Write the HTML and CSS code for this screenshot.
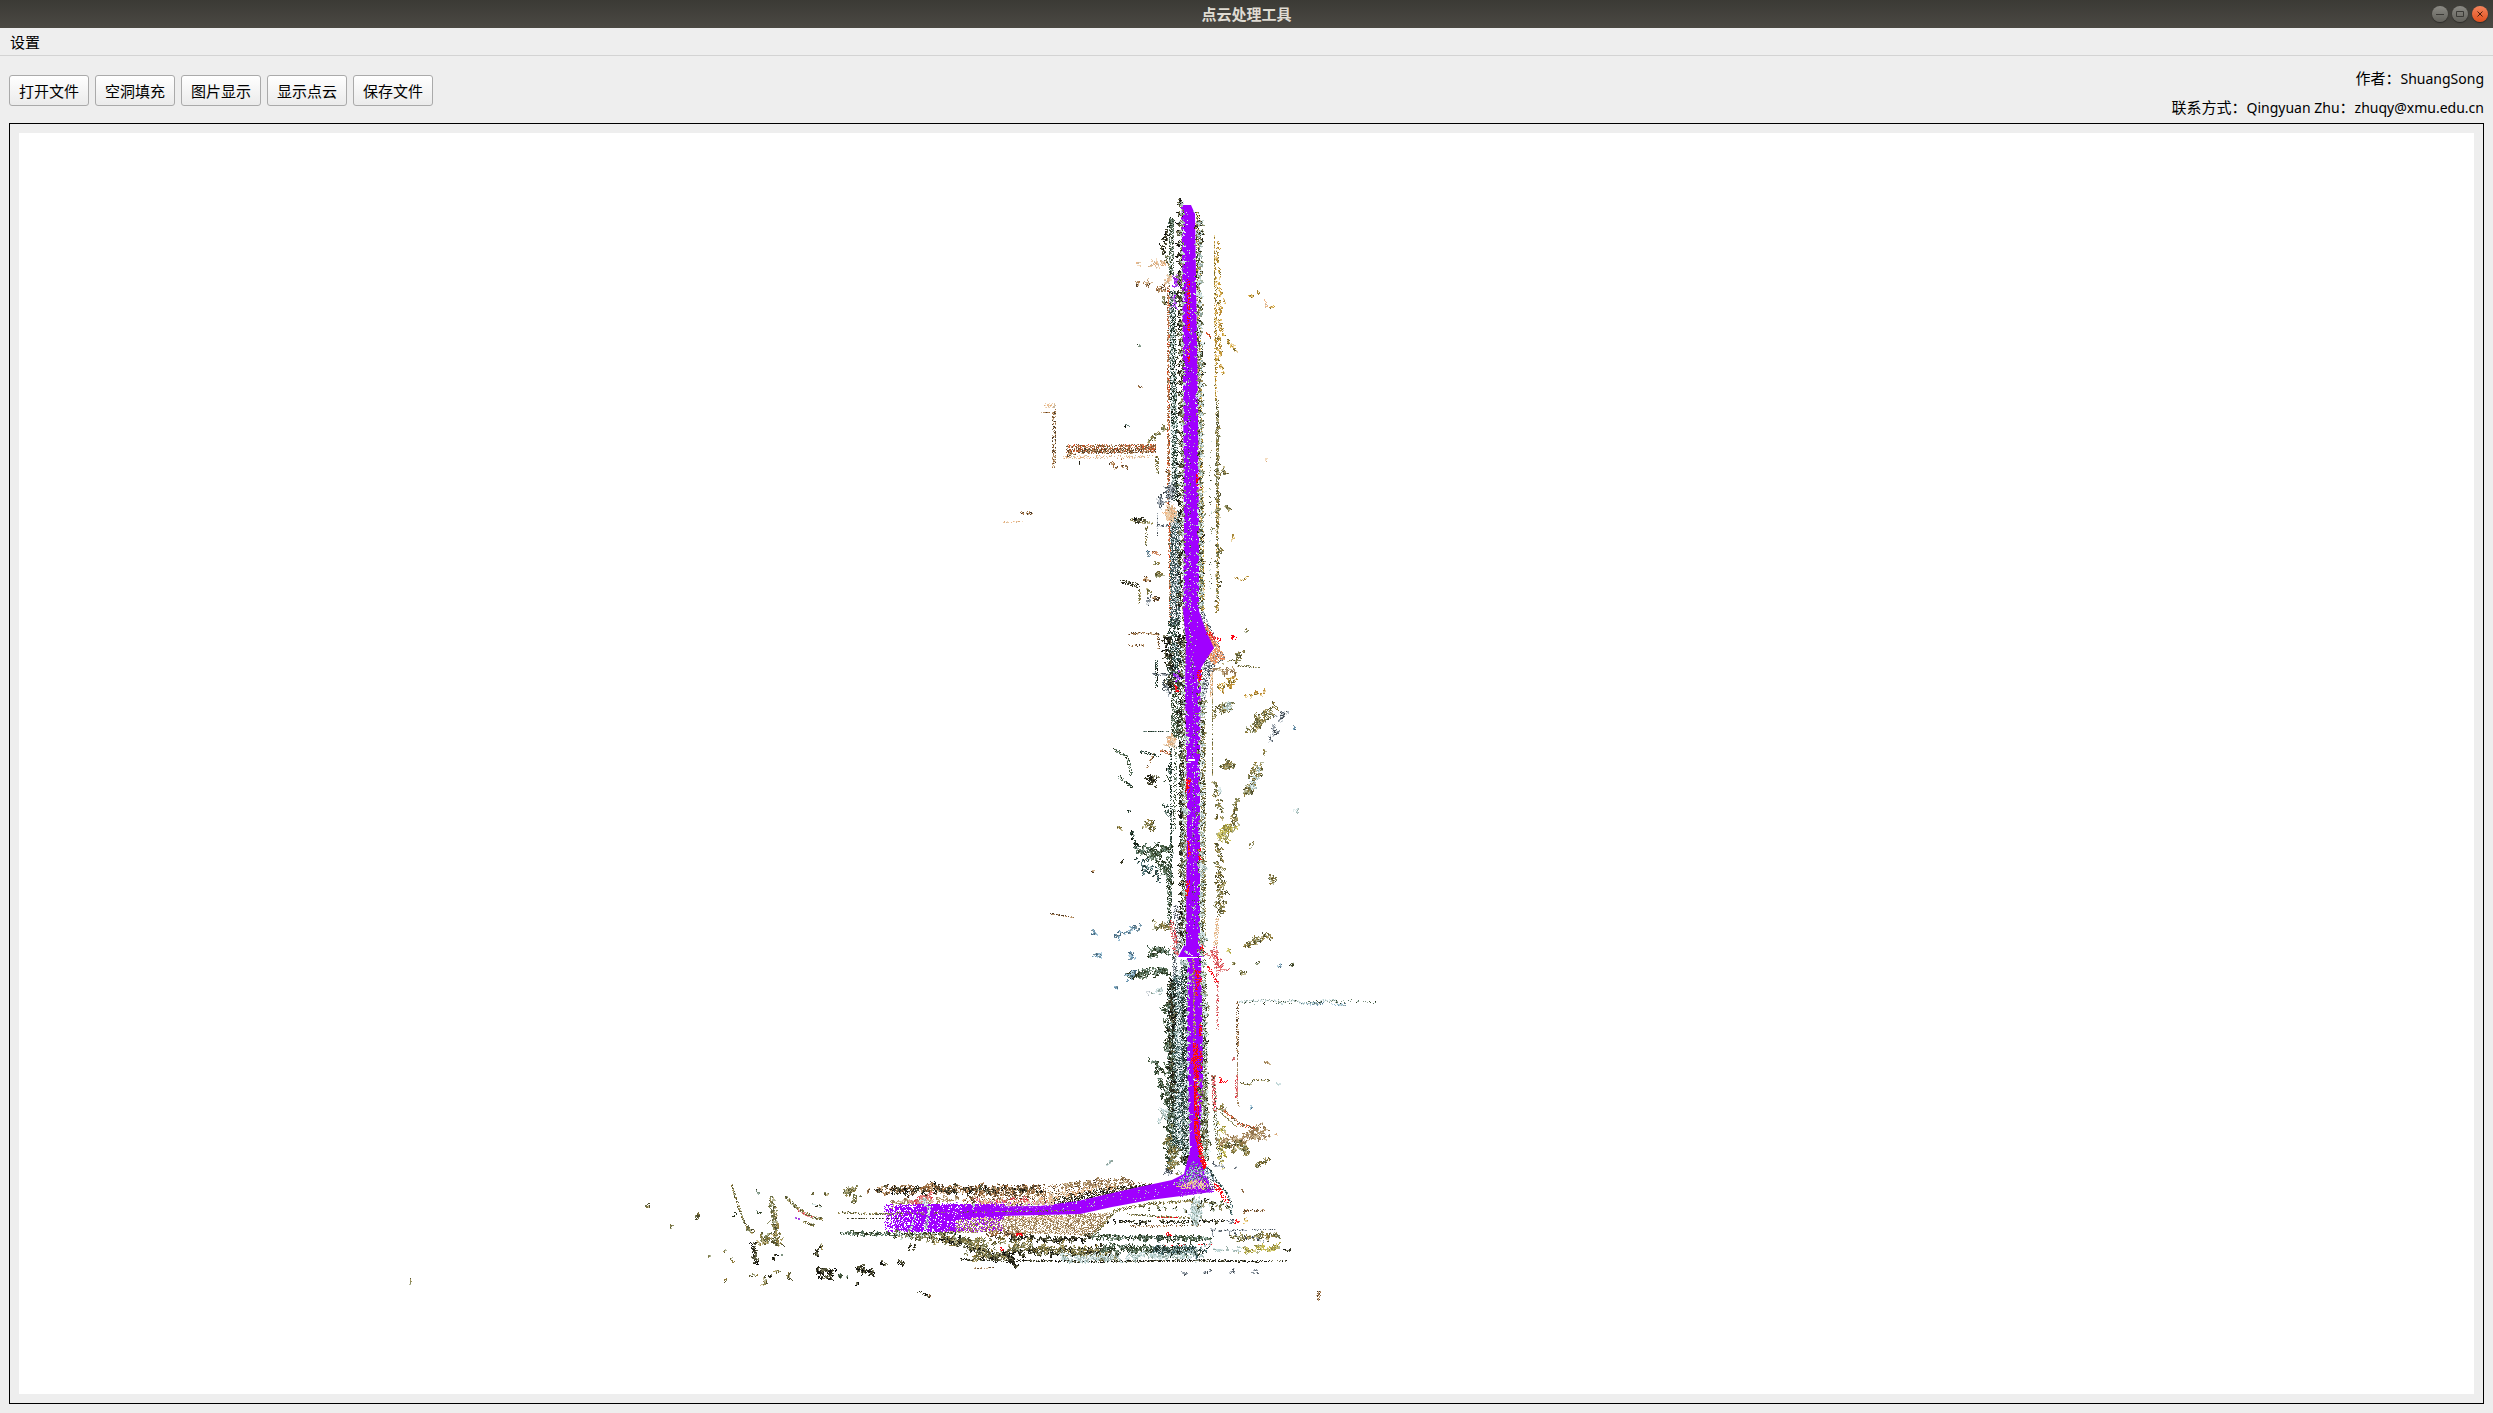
FILE: index.html
```html
<!DOCTYPE html>
<html lang="zh-CN">
<head>
<meta charset="utf-8">
<title>点云处理工具</title>
<link rel="stylesheet" href="styles.css">
</head>
<body>
<div class="window">
  <header class="titlebar">
    <h1 class="title">点云处理工具</h1>
    <div class="controls">
      <button class="control" type="button" aria-label="最小化"><svg viewBox="0 0 16 16"><path d="M4 8.5h8"/></svg></button>
      <button class="control" type="button" aria-label="最大化"><svg viewBox="0 0 16 16"><path d="M4.5 5.5h7v5h-7z"/></svg></button>
      <button class="control control-close" type="button" aria-label="关闭"><svg viewBox="0 0 16 16"><path d="M5.5 5.5l5 5M10.5 5.5l-5 5"/></svg></button>
    </div>
  </header>
  <nav class="menubar"><button class="menu" type="button">设置</button></nav>
  <main class="content">
    <div class="toolbar">
      <div class="actions">
        <button class="action" type="button">打开文件</button>
        <button class="action" type="button">空洞填充</button>
        <button class="action" type="button">图片显示</button>
        <button class="action" type="button">显示点云</button>
        <button class="action" type="button">保存文件</button>
      </div>
      <div class="credits">
        <p>作者：<span class="latin">ShuangSong</span></p>
        <p>联系方式：<span class="latin">Qingyuan Zhu</span>：<span class="latin">zhuqy@xmu.edu.cn</span></p>
      </div>
    </div>
    <section class="frame"><canvas class="cloud" id="cloud" role="img" aria-label="点云"></canvas></section>
  </main>
</div>
<script src="cloud.js"></script>
</body>
</html>
```
FILE: styles.css
```css
* { box-sizing: border-box; }
body {
  margin: 0;
  background: #eee;
  color: #000;
  font: 15px/22px "Noto Sans CJK SC", sans-serif;
}
button { font: inherit; color: inherit; }
.window { display: flex; flex-direction: column; height: 100vh; }
.titlebar {
  display: grid;
  grid-template-columns: 1fr auto 1fr;
  align-items: center;
  height: 28px;
  padding: 0 5px;
  background: linear-gradient(#3b3a35, #4b4943);
}
.title {
  grid-column: 2;
  margin: 0;
  color: #dfdbd2;
  font-size: 15px;
  font-weight: 700;
  line-height: 28px;
}
.controls { display: flex; gap: 4px; justify-content: flex-end; }
.control {
  width: 16px;
  height: 16px;
  padding: 0;
  border: 0;
  border-radius: 50%;
  background: linear-gradient(#8b8a84, #62615b);
  box-shadow: 0 1px 1px #2c2b28;
}
.control svg { display: block; fill: none; stroke: #3b3a36; stroke-width: 1; }
.control-close { background: linear-gradient(#f4845c, #e2501e); }
.control-close svg { stroke: #4a1d0c; }
.menubar { height: 28px; padding: 1px 4px 0; border-bottom: 1px solid #d3d3d3; }
.menu { height: 26px; padding: 0 6px; border: 0; background: none; line-height: 26px; }
.content { flex: 1; display: flex; flex-direction: column; min-height: 0; padding: 9px; }
.toolbar { display: flex; align-items: flex-start; justify-content: space-between; padding-bottom: 5px; }
.actions { display: flex; gap: 6px; padding-top: 10px; }
.action {
  height: 31px;
  padding: 0 9px;
  border: 1px solid #aaa;
  border-radius: 3px;
  background: linear-gradient(#fff, #ebebeb);
  white-space: nowrap;
}
.credits { display: grid; gap: 7px; padding-top: 2px; text-align: right; }
.credits p { height: 22px; margin: 0; }
.latin { font: 14px/22px "Noto Sans", sans-serif; }
.frame { flex: 1; min-height: 0; padding: 9px; border: 1px solid #000; }
.cloud { display: block; width: 100%; height: 100%; background: #fff; }
```
FILE: cloud.js
```js
(function () {
  var canvas = document.getElementById('cloud');
  var ctx = canvas.getContext('2d');
  var CENTRE_X = 1247, CENTRE_Y = 764;
  var seed;

  var PURPLE = '#a000ff', RED = '#ff0010';
  var pal = {
    tree: ['#3a4228', '#5f6040', '#88906a', '#c8dcd6', '#d8eaea', '#2b2a1c', '#7c7a50', '#a9b5a0', '#9a8a5c'],
    gold: ['#c79a35', '#e3bb5c', '#a58637', '#7a6a2c', '#efd699', '#b98a38', '#e8d0a0'],
    olive: ['#7d7340', '#5c5830', '#a5965c', '#8f7a38', '#c8bd90', '#4c4a2c', '#8a8c60', '#b4b89a', '#6c704c'],
    yellow: ['#c7bc50', '#a89c3c', '#d8d080', '#8b8440', '#e2dca0', '#b0b088'],
    dark: ['#1f2f24', '#2c4437', '#476259', '#6d857e', '#12180f', '#8fa39d', '#35503f'],
    green: ['#2c3b26', '#43563a', '#5d7258', '#7d9280', '#28301c', '#54705f', '#9fb5a8'],
    teal: ['#3b5c60', '#587a7c', '#86a3a4', '#2e4540', '#b4c8c8', '#20302a'],
    blue: ['#6a94ae', '#94bad2', '#486a80', '#b2d2e2', '#7a909a'],
    slate: ['#5d6670', '#8a949e', '#b0b8c0', '#3f474d', '#d4dade'],
    brown: ['#8d6c48', '#b8946c', '#5c442c', '#d6b690', '#4a3a28', '#a5703f'],
    rust: ['#a8592c', '#c87040', '#7a5030', '#d8906a', '#6a6040', '#e04820', '#b89878'],
    peach: ['#eccaa4', '#f4dcc0', '#d9a878', '#c8b8a0', '#f0b888'],
    orange: ['#f08850', '#f8a070', '#f0b080', '#e07048', '#d8a070'],
    sand: ['#b29468', '#a08258', '#c8b08a', '#8c7048', '#d8c8ac', '#9a7c60'],
    black: ['#1c1c14', '#2e2c1e', '#45452e', '#5c5c40', '#101010', '#7c7c60'],
    pale: ['#d0e2e4', '#bcd4d4', '#a4b8b4', '#e2eeee', '#90a49c'],
    pink: ['#f08080', '#e8a0a0', '#c86a6a', '#e03040'],
    red: [RED, RED, '#e01018', '#ff3030'],
    violet: [PURPLE, '#b040f0', '#8c30d0', '#c080e8']
  };

  function rnd() {
    seed = (seed * 1664525 + 1013904223) >>> 0;
    return seed / 4294967296;
  }
  function bell() { return (rnd() + rnd() + rnd()) / 1.5 - 1; }
  function dot(x, y, colour) {
    ctx.fillStyle = colour;
    ctx.fillRect(Math.round(x), Math.round(y), 1, 1);
  }
  function pick(list) { return list[Math.floor(rnd() * list.length)]; }

  // A leafy clump: short random walks started around one centre.
  function clump(x, y, rx, ry, name, fill) {
    var walks = Math.max(2, Math.round(rx * ry * (fill || 1) * 0.45));
    for (var i = 0; i < walks; i++) {
      var px = x + bell() * rx, py = y + bell() * ry, c = pick(pal[name]);
      for (var j = 0; j < 6; j++) {
        dot(px, py, c);
        px += Math.round(rnd() * 2 - 1);
        py += Math.round(rnd() * 2 - 1);
        if (rnd() < 0.3) c = pick(pal[name]);
      }
    }
  }
  // A scanned edge: points along a polyline of some thickness.
  function strip(points, width, name, density) {
    for (var i = 1; i < points.length; i++) {
      var a = points[i - 1], b = points[i];
      var len = Math.hypot(b[0] - a[0], b[1] - a[1]) || 1;
      var nx = -(b[1] - a[1]) / len, ny = (b[0] - a[0]) / len;
      var n = len * width * (density || 1);
      for (var k = 0; k < n; k++) {
        var t = rnd(), o = (rnd() - 0.5) * width;
        dot(a[0] + (b[0] - a[0]) * t + nx * o, a[1] + (b[1] - a[1]) * t + ny * o, pick(pal[name]));
      }
    }
  }
  // A loose belt of small clumps along a line.
  function belt(x1, y1, x2, y2, spread, count, size, name) {
    var wide = spread * 1.5;
    for (var i = 0; i < count; i++) {
      var t = (i + rnd()) / count;
      clump(x1 + (x2 - x1) * t + bell() * wide, y1 + (y2 - y1) * t + bell() * wide,
        size * (0.3 + rnd()), size * (0.3 + rnd()), name, 0.9);
    }
  }
  function area(points, colour) {
    ctx.fillStyle = colour;
    ctx.beginPath();
    points.forEach(function (p, i) { i ? ctx.lineTo(p[0], p[1]) : ctx.moveTo(p[0], p[1]); });
    ctx.closePath();
    ctx.fill();
  }
  function cloudArea(points, name, count) {
    var xs = points.map(function (p) { return p[0]; }), ys = points.map(function (p) { return p[1]; });
    var x0 = Math.min.apply(0, xs), x1 = Math.max.apply(0, xs), y0 = Math.min.apply(0, ys), y1 = Math.max.apply(0, ys);
    for (var i = 0; i < count; i++) {
      var x = x0 + rnd() * (x1 - x0), y = y0 + rnd() * (y1 - y0), inside = false;
      for (var a = 0, b = points.length - 1; a < points.length; b = a++) {
        if ((ys[a] > y) !== (ys[b] > y) && x < (xs[b] - xs[a]) * (y - ys[a]) / (ys[b] - ys[a]) + xs[a]) inside = !inside;
      }
      if (inside) dot(x, y, pick(pal[name]));
    }
  }
  function clumps(list) { list.forEach(function (c) { clump.apply(null, c); }); }
  function strips(list) { list.forEach(function (s) { strip.apply(null, s); }); }
  function belts(list) { list.forEach(function (b) { belt.apply(null, b); }); }

  function facades() {
    strips([
      [[[1169, 228], [1172, 218]], 5, 'dark', 1],
      [[[1171, 218], [1171, 275]], 5, 'green', 1.1],
      [[[1168, 285], [1168, 510]], 2, 'rust', 1.4],
      [[[1172, 290], [1173, 380], [1175, 500]], 6, 'dark', 1.2],
      [[[1172, 300], [1174, 480]], 7, 'pale', 0.3],
      [[[1169, 522], [1170, 625]], 2, 'rust', 1.2],
      [[[1175, 510], [1175, 625]], 10, 'teal', 1.2],
      [[[1175, 520], [1175, 625]], 9, 'slate', 0.4],
      [[[1174, 620], [1172, 690]], 13, 'dark', 0.8],
      [[[1177, 640], [1177, 690]], 12, 'teal', 0.5],
      [[[1175, 685], [1175, 738]], 8, 'green', 1],
      [[[1180, 700], [1181, 800], [1184, 940]], 4, 'green', 0.8],
      [[[1170, 740], [1171, 850], [1170, 920]], 2, 'dark', 1],
      [[[1175, 745], [1174, 830]], 3, 'green', 0.5],
      [[[1168, 855], [1169, 925]], 4, 'green', 1],
      [[[1177, 905], [1177, 950]], 8, 'slate', 0.7],
      [[[1170, 920], [1176, 945]], 5, 'pink', 0.7],
      [[[1181, 940], [1174, 956], [1175, 985]], 5, 'slate', 1],
      [[[1177, 975], [1178, 1150]], 12, 'teal', 1.1],
      [[[1171, 980], [1171, 1120], [1175, 1150]], 8, 'dark', 0.9],
      [[[1184, 960], [1185, 1165]], 7, 'dark', 1.2],
      [[[1175, 1000], [1174, 1165]], 10, 'pale', 0.2]
    ]);
    belts([
      [1165, 230, 1164, 252, 2, 8, 3, 'black'],
      [1168, 255, 1166, 265, 2, 5, 3, 'tree'],
      [1167, 1000, 1170, 1170, 4, 52, 4, 'green'],
      [1170, 980, 1173, 1110, 3, 34, 4, 'black'],
      [1180, 965, 1180, 1170, 3, 24, 3, 'pale'],
      [1170, 1130, 1172, 1175, 6, 22, 4, 'olive'],
      [1167, 630, 1172, 690, 5, 22, 4, 'black']
    ]);
    clumps([
      [1168, 279, 5, 5, 'peach', 2], [1163, 263, 4, 5, 'peach', 1], [1154, 264, 5, 5, 'peach', 1],
      [1160, 288, 5, 5, 'brown', 1.3], [1164, 299, 4, 5, 'tree', 1.3], [1174, 297, 5, 5, 'slate', 2],
      [1177, 281, 6, 8, 'violet', 2], [1174, 303, 2, 10, 'violet', 1], [1170, 493, 7, 12, 'slate', 2],
      [1170, 513, 8, 12, 'peach', 2.6], [1160, 500, 4, 8, 'slate', 2], [1171, 740, 6, 9, 'peach', 2],
      [1178, 675, 3, 7, 'violet', 2], [1176, 690, 3, 6, 'red', 0.7]
    ]);
  }

  function westSide() {
    strips([
      [[[1053, 411], [1053, 468]], 2, 'brown', 1], [[[1055, 408], [1055, 463]], 1, 'brown', 0.9],
      [[[1041, 412], [1055, 412]], 1, 'brown', 1], [[[1044, 405], [1055, 405]], 4, 'peach', 0.8],
      [[[1066, 448], [1155, 448]], 8, 'rust', 0.9], [[[1078, 451], [1155, 450]], 5, 'brown', 0.9],
      [[[1140, 448], [1155, 448]], 8, 'rust', 1],
      [[[1062, 457], [1155, 456]], 3, 'peach', 0.5], [[[1156, 455], [1157, 474]], 3, 'olive', 1],
      [[[1078, 459], [1079, 464]], 1, 'black', 1], [[[1121, 458], [1121, 462]], 1, 'rust', 1],
      [[[1020, 512], [1032, 513]], 3, 'brown', 1], [[[1002, 522], [1025, 521]], 1, 'peach', 1],
      [[[1136, 344], [1141, 346]], 2, 'green', 1], [[[1138, 386], [1142, 387]], 2, 'brown', 1],
      [[[1128, 519], [1153, 523]], 3, 'olive', 1], [[[1146, 525], [1146, 545]], 2, 'olive', 1],
      [[[1157, 512], [1157, 538]], 1, 'slate', 1], [[[1156, 525], [1168, 525]], 3, 'slate', 1],
      [[[1120, 581], [1138, 585]], 4, 'black', 1], [[[1139, 585], [1139, 604]], 2, 'olive', 1],
      [[[1128, 633], [1158, 633], [1158, 648]], 2, 'brown', 1], [[[1127, 645], [1144, 645]], 2, 'brown', 0.7],
      [[[1156, 659], [1156, 687]], 3, 'dark', 0.8], [[[1152, 674], [1172, 674]], 3, 'slate', 0.9],
      [[[1143, 731], [1168, 731]], 1, 'dark', 1.4], [[[1113, 748], [1127, 757], [1131, 775]], 3, 'green', 0.8],
      [[[1140, 751], [1160, 755]], 3, 'dark', 0.8], [[[1153, 753], [1147, 768]], 2, 'brown', 0.8],
      [[[1160, 750], [1171, 753]], 3, 'rust', 0.8], [[[1118, 776], [1132, 787]], 3, 'green', 0.7],
      [[[1049, 913], [1073, 917]], 1, 'brown', 1.5], [[[1125, 780], [1131, 786]], 2, 'dark', 1]
    ]);
    belts([
      [1108, 464, 1128, 467, 1, 5, 2, 'brown'], [1147, 445, 1165, 426, 1, 8, 3, 'olive'],
      [1138, 850, 1166, 852, 6, 20, 4, 'green'], [1155, 850, 1169, 880, 4, 20, 4, 'green'],
      [1137, 858, 1160, 878, 6, 18, 3, 'teal'],
      [1148, 952, 1170, 950, 4, 20, 4, 'green'], [1128, 975, 1166, 972, 4, 30, 4, 'green'],
      [1156, 925, 1168, 928, 3, 10, 4, 'olive'], [1130, 830, 1137, 848, 2, 7, 3, 'dark'],
      [1115, 937, 1140, 925, 2, 14, 3, 'blue'], [1155, 1060, 1165, 1100, 4, 18, 4, 'green'],
      [1168, 1110, 1160, 1120, 5, 12, 3, 'pale'], [1164, 680, 1170, 695, 3, 9, 3, 'slate']
    ]);
    clumps([
      [1137, 264, 2, 3, 'peach'], [1136, 283, 4, 3, 'brown', 1.2], [1148, 283, 5, 3, 'brown'], [1125, 424, 1, 1, 'dark'],
      [1070, 453, 6, 3, 'brown', 1.6], [1167, 472, 3, 3, 'brown'], [1138, 520, 9, 3, 'black', 1],
      [1155, 552, 3, 4, 'rust'], [1147, 553, 3, 3, 'blue'], [1157, 562, 3, 2, 'olive', 2], [1158, 574, 5, 5, 'olive', 1.4],
      [1146, 579, 4, 3, 'brown', 1.4], [1147, 590, 3, 2, 'olive', 2], [1148, 600, 4, 4, 'slate', 1.4], [1156, 598, 5, 3, 'brown', 1.4],
      [1151, 779, 8, 7, 'black', 1.3], [1149, 824, 8, 7, 'olive', 1], [1119, 828, 4, 3, 'olive'], [1128, 810, 2, 2, 'dark'],
      [1121, 862, 2, 2, 'black'], [1144, 871, 4, 3, 'teal'], [1092, 871, 1, 1, 'brown'],
      [1092, 933, 4, 4, 'blue'], [1097, 955, 5, 4, 'blue', 1.3], [1131, 955, 4, 6, 'blue', 1.3], [1116, 988, 3, 3, 'blue'],
      [1147, 992, 2, 2, 'slate'], [1158, 990, 6, 6, 'pale'], [1130, 974, 7, 6, 'blue'], [1109, 1162, 5, 2, 'pale'],
      [1169, 770, 3, 5, 'dark'], [1168, 778, 3, 3, 'green'], [1166, 808, 3, 9, 'dark', 0.8]
    ]);
  }

  function eastSide() {
    strips([
      [[[1214, 234], [1215, 400]], 1, 'gold', 1.3], [[[1215, 250], [1216, 400]], 2, 'gold', 0.5],
      [[[1217, 400], [1217, 530]], 3, 'olive', 0.9], [[[1217, 500], [1217, 610]], 2, 'gold', 0.8],
      [[[1212, 670], [1212, 775]], 1, 'olive', 1.2], [[[1210, 440], [1210, 600]], 3, 'tree', 0.1],
      [[[1218, 860], [1218, 918]], 4, 'olive', 0.5], [[[1217, 918], [1215, 945]], 4, 'peach', 0.9],
      [[[1217, 950], [1217, 1030]], 2, 'pink', 0.6], [[[1215, 945], [1216, 968]], 5, 'pink', 0.6],
      [[[1207, 965], [1216, 982]], 3, 'red', 0.7], [[[1216, 970], [1230, 969]], 2, 'pink', 0.7],
      [[[1237, 1001], [1237, 1055]], 2, 'brown', 0.9], [[[1237, 1055], [1237, 1100], [1239, 1107]], 1, 'sand', 1],
      [[[1238, 1002], [1250, 1000], [1278, 1000], [1281, 1004], [1285, 1000], [1296, 1000], [1300, 1003], [1318, 1003], [1321, 1000], [1336, 1000], [1338, 1005], [1345, 1005]], 2, 'pale', 0.9],
      [[[1240, 1003], [1345, 1001]], 3, 'green', 0.15], [[[1300, 1003], [1345, 1004]], 3, 'blue', 0.3],
      [[[1345, 1000], [1376, 1002]], 2, 'green', 0.3], [[[1240, 1083], [1250, 1084], [1253, 1079], [1271, 1080]], 2, 'olive', 0.8],
      [[[1236, 1075], [1236, 1098]], 3, 'pink', 0.7], [[[1213, 1075], [1215, 1130], [1221, 1165]], 4, 'tree', 0.6],
      [[[1213, 1075], [1214, 1110]], 4, 'pink', 0.7], [[[1220, 1107], [1240, 1124], [1260, 1129]], 3, 'rust', 0.8],
      [[[1220, 1112], [1237, 1127]], 1, 'olive', 1.3], [[[1236, 665], [1260, 667]], 2, 'olive', 0.7],
      [[[1222, 664], [1232, 659], [1237, 662]], 1, 'olive', 1],
      [[[1234, 577], [1242, 580], [1248, 575]], 2, 'gold', 0.9], [[[1232, 637], [1236, 638]], 2, 'red', 0.5],
      [[[1317, 1300], [1319, 1290]], 4, 'brown', 1], [[[1124 + 120, 1213], [1244, 1210], [1264, 1210]], 2, 'brown', 0.8]
    ]);
    belts([
      [1219, 240, 1222, 370, 3, 26, 2, 'gold'], [1218, 280, 1220, 370, 3, 22, 2, 'gold'], [1226, 340, 1236, 350, 3, 7, 3, 'gold'],
      [1217, 412, 1217, 610, 1, 40, 3, 'olive'], [1222, 470, 1226, 473, 2, 6, 3, 'olive'],
      [1214, 668, 1235, 672, 4, 12, 3, 'sand'], [1218, 690, 1234, 678, 3, 16, 3, 'gold'], [1216, 710, 1228, 705, 5, 14, 4, 'olive'],
      [1235, 660, 1242, 650, 2, 8, 3, 'olive'], [1247, 697, 1264, 690, 2, 9, 2, 'gold'],
      [1249, 730, 1273, 708, 4, 24, 4, 'olive'], [1270, 742, 1285, 708, 5, 20, 2, 'slate'],
      [1222, 768, 1234, 762, 3, 12, 4, 'olive'], [1246, 792, 1258, 764, 4, 22, 4, 'olive'], [1262, 768, 1250, 792, 4, 9, 3, 'pale'],
      [1214, 780, 1220, 820, 3, 13, 3, 'olive'], [1219, 838, 1234, 824, 5, 28, 4, 'yellow'], [1218, 845, 1220, 858, 3, 10, 3, 'olive'],
      [1235, 800, 1234, 825, 2, 12, 3, 'olive'], [1217, 860, 1222, 915, 4, 32, 3, 'olive'], [1245, 945, 1270, 935, 2, 18, 4, 'olive'],
      [1210, 950, 1220, 965, 4, 10, 3, 'pink'], [1220, 1120, 1222, 1165, 3, 16, 3, 'yellow'],
      [1222, 1142, 1262, 1133, 6, 40, 4, 'sand'], [1226, 1145, 1250, 1152, 4, 18, 4, 'olive'], [1255, 1167, 1267, 1158, 1, 9, 3, 'olive'],
      [1232, 1237, 1278, 1235, 3, 32, 3, 'olive'], [1240, 1250, 1280, 1245, 3, 26, 3, 'yellow']
    ]);
    clumps([
      [1250, 296, 4, 3, 'gold'], [1258, 293, 2, 1, 'gold'], [1265, 305, 3, 4, 'peach'], [1271, 307, 2, 3, 'gold'], [1209, 335, 2, 2, 'rust'],
      [1266, 458, 3, 1, 'peach'], [1228, 508, 4, 4, 'olive', 1.4], [1220, 550, 4, 3, 'olive', 1.3], [1233, 538, 3, 2, 'gold'], [1245, 630, 3, 1, 'olive'],
      [1226, 706, 7, 6, 'pale', 1], [1232, 636, 3, 2, 'red'], [1263, 752, 3, 2, 'olive'], [1293, 728, 1, 1, 'blue'],
      [1297, 810, 3, 3, 'pale'], [1251, 845, 2, 3, 'olive'], [1271, 880, 5, 6, 'olive', 1.2],
      [1257, 963, 3, 3, 'tree'], [1280, 965, 4, 2, 'blue'], [1292, 963, 4, 4, 'tree'], [1243, 972, 6, 4, 'olive'],
      [1228, 950, 3, 6, 'yellow'], [1233, 964, 3, 2, 'olive'], [1232, 1058, 2, 2, 'pink'], [1267, 1061, 2, 5, 'sand'],
      [1221, 1080, 3, 3, 'red'], [1251, 1109, 2, 4, 'blue'], [1278, 1084, 3, 2, 'pale'], [1275, 1133, 2, 2, 'peach'],
      [1221, 1107, 4, 5, 'olive'], [1219, 1165, 5, 3, 'slate'], [1236, 1166, 2, 2, 'slate'], [1288, 1250, 3, 4, 'black', 0.7],
      [1242, 1191, 1, 1, 'brown'], [1236, 1221, 4, 3, 'red', 0.6], [1244, 1221, 3, 3, 'gold', 1], [1232, 1221, 4, 3, 'slate'],
      [1183, 1272, 4, 2, 'slate'], [1206, 1271, 4, 3, 'slate'], [1232, 1271, 4, 2, 'slate'], [1255, 1271, 4, 2, 'slate'],
      [1219, 790, 4, 4, 'pale'], [1212, 637, 3, 2, 'pink']
    ]);
  }

  function mainRoad() {
    strips([
      [[[1182, 205], [1183, 500], [1184, 700], [1186, 940]], 4, 'olive', 0.8],
      [[[1197, 212], [1199, 400], [1201, 500], [1202, 610]], 4, 'gold', 0.9],
      [[[1197, 212], [1201, 610]], 4, 'green', 0.4],
      [[[1203, 700], [1203, 940]], 4, 'olive', 0.8],
      [[[1202, 970], [1205, 1160]], 6, 'tree', 0.9]
    ]);
    cloudArea([[1183, 611], [1203, 611], [1214, 635], [1225, 658], [1212, 668], [1204, 700], [1184, 690]], 'slate', 3200);
    cloudArea([[1205, 622], [1212, 634], [1225, 658], [1214, 664], [1204, 655]], 'orange', 1000);
    strip([[1211, 668], [1211, 698]], 3, 'peach', 1);
    area([[1181, 205], [1191, 205], [1195, 214], [1198, 400], [1199, 530], [1199, 611], [1206, 631], [1214, 648],
      [1207, 658], [1201, 668], [1200, 760], [1200, 940], [1204, 957], [1178, 957], [1186, 942], [1187, 800],
      [1185, 690], [1186, 640], [1183, 610], [1184, 530], [1182, 240]], PURPLE);
    area([[1187, 958], [1201, 958], [1203, 1050], [1203, 1090], [1199, 1150], [1204, 1166], [1205, 1180],
      [1180, 1184], [1184, 1174], [1190, 1150], [1187, 1060]], PURPLE);
    strip([[1189, 290], [1189, 610], [1193, 700], [1193, 930]], 3, 'slate', 0.22);
    strip([[1193, 958], [1194, 1045]], 2, 'sand', 1);
    strip([[1188, 210], [1191, 600], [1193, 940]], 12, 'pale', 0.035);
    strips([
      [[[1188, 279], [1188, 330]], 3, 'red', 0.7], [[[1188, 346], [1188, 362]], 3, 'red', 0.4],
      [[[1197, 473], [1198, 487]], 4, 'red', 1], [[[1206, 632], [1220, 640]], 4, 'red', 0.6],
      [[[1199, 670], [1199, 682]], 4, 'red', 1.2], [[[1188, 778], [1187, 792]], 4, 'red', 1],
      [[[1188, 840], [1189, 857]], 2, 'red', 1], [[[1199, 848], [1200, 860]], 3, 'red', 1], [[[1188, 880], [1186, 896]], 3, 'red', 1],
      [[[1201, 942], [1202, 955]], 3, 'red', 1.2], [[[1199, 970], [1199, 985]], 4, 'red', 1], [[[1200, 1023], [1200, 1036]], 3, 'red', 1],
      [[[1196, 970], [1196, 995]], 2, 'red', 0.8], [[[1195, 1043], [1196, 1090], [1196, 1130], [1204, 1168]], 5, 'red', 1.3],
      [[[1191, 1057], [1191, 1063]], 2, 'red', 1], [[[1200, 1050], [1201, 1070]], 3, 'red', 0.8],
      [[[1178, 955], [1171, 945]], 3, 'pink', 1]
    ]);
    ctx.fillStyle = '#fff';
    ctx.fillRect(1180, 957, 17, 1);
    ctx.fillRect(1188, 759, 7, 2);
    for (var y = 203; y < 1160; y += 10) {
      if (y > 610 && y < 635) continue;
      var shift = Math.round((y - 200) / 320);
      if (y < 950) {
        clump(1179 + shift, y + bell() * 2, 3, 4, 'black', 1.4);
        clump(1181 + shift, y + bell() * 2, 3, 3, 'tree', 1.4);
        clump(1182 + shift, y, 2, 2, 'pale', 1.5);
      } else {
        clump(1187, y, 3, 4, 'pale', 1.3);
      }
      if (y > 213 && (y < 612 || y > 678)) {
        var right = 1199 + shift + (y > 960 ? 2 : 0);
        clump(right, y + bell() * 2, 4, 4, 'tree', 1.7);
        clump(right, y + 1, 3, 3, 'pale', 1.3);
      }
    }
    clumps([
      [1185, 810, 7, 4, 'pale', 1.6], [1201, 867, 6, 3, 'pale', 1.6], [1204, 867, 4, 4, 'pale'], [1202, 937, 6, 4, 'pale', 1.4],
      [1183, 962, 6, 4, 'pale', 1.6], [1181, 640, 4, 6, 'black', 1.5], [1186, 738, 4, 4, 'pale', 1.4], [1208, 668, 4, 5, 'slate', 1.2]
    ]);
    belt(1201, 1080, 1205, 1150, 3, 24, 4, 'tree');
  }

  function southRoad() {
    strips([
      [[[878, 1190], [990, 1190]], 5, 'brown', 0.3],
      [[[838, 1212], [895, 1214], [960, 1212]], 2, 'olive', 1], [[[846, 1218], [900, 1218]], 1, 'black', 1],
      [[[840, 1233], [900, 1234], [960, 1232]], 3, 'green', 0.8],
      [[[731, 1184], [737, 1203], [744, 1222], [751, 1231]], 2, 'olive', 1.4],
      [[[785, 1196], [797, 1208], [810, 1216], [822, 1219]], 3, 'olive', 1.4], [[[797, 1210], [812, 1217]], 2, 'pink', 0.6],
      [[[794, 1217], [800, 1219]], 2, 'violet', 1], [[[803, 1221], [814, 1225]], 3, 'olive', 1],
      [[[868, 1188], [867, 1194]], 2, 'brown', 1], [[[897, 1261], [904, 1264]], 5, 'black', 1],
      [[[916, 1290], [930, 1296]], 3, 'black', 0.6], [[[973, 1268], [993, 1267]], 1, 'brown', 1],
      [[[960, 1259], [1080, 1261], [1200, 1260], [1262, 1261]], 2, 'black', 1], [[[1262, 1261], [1290, 1260]], 1, 'black', 0.7],
      [[[1213, 1237], [1211, 1230], [1276, 1229]], 1, 'slate', 1], [[[1127, 1214], [1160, 1216], [1200, 1218]], 2, 'olive', 0.9],
      [[[1160, 1222], [1224, 1220]], 3, 'black', 0.7], [[[1118, 1221], [1132, 1221]], 3, 'black', 1], [[[1138, 1221], [1150, 1221]], 3, 'black', 0.9],
      [[[1128, 1226], [1200, 1225]], 2, 'brown', 0.5], [[[1156, 1217], [1178, 1217]], 1, 'red', 0.8],
      [[[1100, 1236], [1210, 1238]], 3, 'dark', 0.6], [[[1163, 1245], [1212, 1244]], 1, 'red', 0.4],
      [[[908, 1250], [911, 1243]], 2, 'black', 1], [[[912, 1250], [915, 1244]], 2, 'black', 1]
    ]);
    // Kerb and verge north of the road.
    cloudArea([[970, 1186], [1060, 1183], [1110, 1177], [1150, 1183], [1165, 1184], [1075, 1203], [960, 1208]], 'brown', 2000);
    cloudArea([[1050, 1198], [1110, 1186], [1168, 1183], [1100, 1196], [1050, 1206]], 'black', 1900);
    belts([
      [878, 1190, 1040, 1188, 3, 64, 4, 'brown'], [880, 1190, 1040, 1189, 4, 40, 3, 'black'], [975, 1200, 1050, 1200, 3, 20, 3, 'pink'],
      [960, 1204, 1050, 1203, 2, 22, 3, 'peach'], [1040, 1198, 1110, 1186, 3, 18, 3, 'peach'], [1060, 1186, 1130, 1181, 3, 34, 3, 'sand'],
      [890, 1203, 960, 1198, 2, 24, 3, 'sand'], [910, 1200, 932, 1196, 3, 14, 4, 'pink'], [970, 1195, 1045, 1192, 4, 26, 3, 'brown']
    ]);
    cloudArea([[960, 1218], [1115, 1212], [1100, 1228], [1090, 1236], [1050, 1233], [940, 1232]], 'sand', 3900);
    // Carriageway, thinning out to the west.
    area([[962, 1207], [1040, 1206], [1078, 1201], [1130, 1189], [1172, 1180], [1190, 1171], [1206, 1176], [1212, 1192],
      [1150, 1200], [1112, 1207], [1080, 1214], [962, 1217]], PURPLE);
    cloudArea([[884, 1210], [925, 1205], [975, 1200], [1060, 1204], [990, 1218], [1000, 1231], [890, 1231]], 'violet', 900);
    for (var i = 0; i < 6500; i++) {
      var px = 884 + rnd() * 120, py = 1204 + rnd() * 27;
      if (rnd() < (px - 875) / 50 && (px < 955 || py < 1219 || rnd() < 0.13)) dot(px, py, PURPLE);
    }
    strip([[880, 1213], [1075, 1210]], 1, 'olive', 0.7);
    strip([[970, 1218], [1075, 1218]], 2, 'peach', 0.9);
    strips([
      [[[915, 1215], [910, 1229]], 2, 'pale', 1.4], [[[929, 1206], [925, 1229]], 3, 'pale', 1.4], [[[973, 1203], [973, 1210]], 2, 'pale', 1.5],
      [[[1076, 1199], [1076, 1205]], 1, 'pale', 2], [[[1000, 1208], [1060, 1206], [1120, 1198], [1190, 1184]], 10, 'pale', 0.04]
    ]);
    strip([[1195, 1200], [1150, 1203], [1115, 1210], [1104, 1222], [1092, 1236]], 3, 'olive', 0.9);
    // Junction with the main road.
    cloudArea([[1194, 1166], [1207, 1166], [1220, 1188], [1212, 1190], [1172, 1184], [1183, 1176]], 'slate', 700);
    cloudArea([[1193, 1160], [1207, 1166], [1214, 1180], [1178, 1182], [1185, 1172]], 'blue', 380);
    cloudArea([[1176, 1186], [1198, 1178], [1210, 1184], [1203, 1189], [1180, 1188]], 'peach', 650);
    cloudArea([[1174, 1188], [1200, 1168], [1216, 1192], [1180, 1196]], 'violet', 380);
    strips([
      [[[1207, 1166], [1216, 1180], [1226, 1192], [1231, 1204], [1231, 1214]], 2, 'teal', 1], [[[1214, 1183], [1228, 1203]], 5, 'red', 0.5],
      [[[1200, 1150], [1205, 1168]], 3, 'red', 1]
    ]);
    belts([
      [940, 1236, 1000, 1258, 4, 56, 3, 'black'], [930, 1236, 985, 1248, 3, 26, 4, 'olive'], [970, 1253, 1010, 1255, 3, 26, 4, 'olive'],
      [960, 1240, 1010, 1240, 4, 26, 3, 'olive'],
      [985, 1232, 1025, 1234, 2, 18, 3, 'brown'], [1010, 1238, 1090, 1238, 3, 50, 3, 'black'], [1000, 1252, 1110, 1250, 4, 66, 3, 'black'],
      [1010, 1246, 1110, 1254, 5, 60, 4, 'olive'], [1092, 1237, 1210, 1238, 2, 38, 4, 'green'], [1100, 1248, 1200, 1251, 3, 58, 4, 'green'],
      [1060, 1258, 1200, 1255, 3, 60, 4, 'pale'], [1150, 1250, 1204, 1250, 4, 28, 4, 'teal'], [1100, 1222, 1215, 1222, 2, 10, 2, 'black'],
      [1195, 1198, 1196, 1222, 5, 32, 4, 'pale'], [1190, 1200, 1225, 1206, 5, 18, 3, 'tree'], [1140, 1206, 1190, 1210, 2, 9, 2, 'tree'],
      [846, 1234, 900, 1232, 1, 14, 3, 'green'], [895, 1234, 935, 1235, 3, 24, 3, 'tree'], [1008, 1254, 1016, 1266, 2, 10, 3, 'black'],
      [853, 1200, 856, 1200, 4, 5, 3, 'olive'], [843, 1194, 856, 1188, 3, 14, 3, 'olive'],
      [771, 1198, 774, 1215, 1, 12, 3, 'olive'], [774, 1215, 778, 1245, 3, 34, 3, 'olive'], [760, 1238, 772, 1240, 7, 18, 3, 'olive'],
      [753, 1242, 756, 1264, 1, 14, 3, 'black'], [748, 1228, 751, 1230, 1, 4, 3, 'olive'], [857, 1268, 872, 1270, 3, 14, 3, 'black'],
      [818, 1270, 832, 1275, 4, 20, 3, 'black'], [1205, 1246, 1240, 1250, 4, 10, 2, 'pale'], [1210, 1230, 1270, 1240, 2, 8, 2, 'slate']
    ]);
    clumps([
      [648, 1205, 3, 4, 'olive', 0.8], [671, 1226, 3, 3, 'olive', 0.7], [697, 1216, 4, 5, 'olive', 1], [708, 1256, 2, 2, 'olive'],
      [724, 1249, 1, 2, 'olive'], [732, 1260, 3, 1, 'olive'], [726, 1280, 1, 2, 'olive'], [757, 1192, 2, 3, 'green'], [736, 1214, 2, 2, 'green'],
      [759, 1212, 2, 1, 'green'], [774, 1257, 3, 4, 'black'], [782, 1255, 1, 2, 'green'], [789, 1275, 2, 6, 'olive', 1.4],
      [777, 1270, 2, 3, 'olive'], [768, 1276, 3, 3, 'black'], [764, 1282, 4, 5, 'olive', 1.2], [753, 1276, 3, 2, 'olive'],
      [816, 1252, 3, 8, 'black', 0.8], [822, 1245, 3, 2, 'olive'], [839, 1274, 3, 4, 'green'], [847, 1276, 1, 3, 'green'],
      [817, 1205, 4, 2, 'tree'], [827, 1194, 4, 2, 'olive'], [811, 1194, 1, 1, 'olive'], [858, 1283, 2, 3, 'black'],
      [882, 1263, 3, 3, 'black', 1.8], [871, 1273, 4, 4, 'black', 1.6], [930, 1296, 2, 2, 'brown'], [932, 1185, 4, 4, 'brown', 1.2],
      [924, 1202, 5, 5, 'pale', 1.3], [411, 1281, 2, 1, 'olive'], [1018, 1234, 4, 3, 'red', 0.9], [1000, 1249, 2, 2, 'red'], [1167, 1235, 3, 3, 'red', 0.8],
      [1158, 1238, 4, 4, 'dark', 1.6], [1050, 1201, 5, 5, 'peach', 1.5], [1183, 1158, 5, 5, 'black', 1.2], [1168, 1172, 5, 4, 'slate', 1.5]
    ]);
  }

  function render() {
    canvas.width = canvas.clientWidth;
    canvas.height = canvas.clientHeight;
    ctx.setTransform(1, 0, 0, 1, Math.round(canvas.width / 2) - CENTRE_X, Math.round(canvas.height / 2) - CENTRE_Y);
    seed = 20210;
    facades();
    westSide();
    eastSide();
    mainRoad();
    southRoad();
  }

  window.addEventListener('resize', render);
  render();
}());
```
